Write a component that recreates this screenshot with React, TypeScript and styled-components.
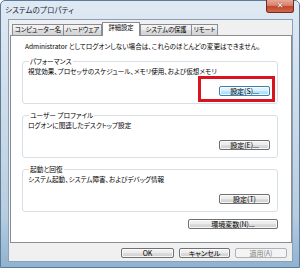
import React from "react";
import styled, { createGlobalStyle, css } from "styled-components";

const Global = createGlobalStyle`
  html, body { margin: 0; padding: 0; background: #fff; }
  body { width: 300px; height: 268px; overflow: hidden; }
  * { box-sizing: border-box; }
`;

const FONT = `"Noto Sans CJK JP", "Noto Sans", sans-serif`;

const Window = styled.div`
  position: relative;
  width: 300px;
  height: 268px;
  padding: 18px 6px 5px 7px;
  display: flex;
  flex-direction: column;
  font-family: ${FONT};
  font-feature-settings: "palt";
  color: #000;
  background: linear-gradient(180deg, #dfe9f3 0%, #cddcea 40%, #b8cde1 80%, #8fb2d2 100%);
  border: 1px solid #5d7a96;
  border-radius: 5px 5px 0 0;
`;

const TitleBar = styled.div`
  position: absolute;
  left: 0;
  right: 0;
  top: 0;
  height: 18px;
  display: flex;
  align-items: center;
  padding-left: 4px;
`;

const Title = styled.span`
  font-size: 7.5px;
  line-height: 1;
  color: #1b2a3a;
  letter-spacing: 0.1px;
`;

const CloseButton = styled.div`
  position: absolute;
  top: -1px;
  right: 5px;
  width: 28px;
  height: 13px;
  border: 1px solid #6e2d24;
  border-top: none;
  border-radius: 0 0 3px 3px;
  background: linear-gradient(180deg, #e9a898 0%, #d8806b 45%, #c4452b 55%, #cf6a4c 100%);
  display: flex;
  align-items: center;
  justify-content: center;
  color: #fff;
  font-family: "DejaVu Sans", sans-serif;
  font-weight: bold;
  font-size: 8px;
  line-height: 1;
  text-shadow: 0 0 1px #5a1a10;
`;

const Client = styled.div`
  flex: 1;
  background: #f0f0f0;
  border: 1px solid #8aa0b6;
  padding: 2px 2px 0 1px;
  display: flex;
  flex-direction: column;
`;

const TabStrip = styled.div`
  display: flex;
  align-items: flex-end;
  height: 13px;
  padding-left: 2px;
  position: relative;
  z-index: 1;
`;

const Tab = styled.div<{ $w: number; $active?: boolean }>`
  width: ${(p) => p.$w}px;
  height: 11px;
  border: 1px solid #898c95;
  border-bottom: none;
  margin-right: -1px;
  font-size: 6.3px;
  letter-spacing: -0.1px;
  line-height: 1;
  display: flex;
  align-items: center;
  justify-content: center;
  white-space: nowrap;
  overflow: hidden;
  background: linear-gradient(180deg, #f4f4f4 0%, #ebebeb 50%, #dcdcdc 51%, #d4d4d4 100%);
  ${(p) =>
    p.$active &&
    css`
      height: 14px;
      margin-bottom: -1px;
      margin-left: 1px;
      margin-right: 0;
      background: #fff;
      position: relative;
      z-index: 2;
      padding-bottom: 2px;
    `}
`;

const Panel = styled.div`
  width: 282px;
  height: 208px;
  background: #fff;
  border: 1px solid #898c95;
  padding: 6px 0 0 11px;
  display: flex;
  flex-direction: column;
`;

const Intro = styled.div`
  font-size: 6.6px;
  line-height: 8px;
  padding-left: 3px;
  white-space: nowrap;
`;

const GroupBox = styled.fieldset`
  margin: 0;
  width: 256px;
  height: 47px;
  border: 1px solid #d5dfe5;
  border-radius: 3px;
  padding: 0 7px 0 5px;
  display: flex;
  flex-direction: column;
  & + & {
    margin-top: 7px;
  }
`;

const Legend = styled.legend`
  font-size: 6.7px;
  line-height: 8px;
  padding: 0 1px;
  margin-left: 1px;
`;

const GroupText = styled.div`
  font-size: 6.6px;
  line-height: 8px;
  margin-top: 2px;
  white-space: nowrap;
`;

const ButtonRow = styled.div`
  display: flex;
  justify-content: flex-end;
  margin-top: 11px;
  position: relative;
`;

const Button = styled.div<{ $w?: number; $focus?: boolean; $disabled?: boolean }>`
  width: ${(p) => p.$w ?? 51}px;
  height: 10px;
  border: 1px solid #707070;
  border-radius: 2px;
  background: linear-gradient(180deg, #f2f2f2 0%, #ebebeb 50%, #dddddd 51%, #cfcfcf 100%);
  box-shadow: inset 0 0 0 1px rgba(255, 255, 255, 0.8);
  font-size: 7px;
  line-height: 1;
  display: flex;
  align-items: center;
  justify-content: center;
  white-space: nowrap;
  ${(p) =>
    p.$focus &&
    css`
      border-color: #3c7fb1;
      background: linear-gradient(180deg, #eaf6fd 0%, #d9f0fc 50%, #bee6fd 51%, #a7d9f5 100%);
    `}
  ${(p) =>
    p.$disabled &&
    css`
      border-color: #adb2b5;
      background: #f4f4f4;
      color: #838383;
      box-shadow: none;
    `}
`;

const Highlight = styled.div`
  position: absolute;
  right: -5px;
  top: -10px;
  width: 77px;
  height: 26px;
  border: 3px solid #d9141f;
  pointer-events: none;
`;

const EnvRow = styled.div`
  display: flex;
  justify-content: flex-end;
  width: 256px;
  margin-top: 7px;
`;

const Footer = styled.div`
  display: flex;
  justify-content: flex-end;
  gap: 5px;
  margin-top: 5px;
  padding-right: 3px;
`;

export default function App() {
  return (
    <>
      <Global />
      <Window>
        <TitleBar>
          <Title>システムのプロパティ</Title>
          <CloseButton>✕</CloseButton>
        </TitleBar>
        <Client>
          <TabStrip>
            <Tab $w={52}>コンピューター名</Tab>
            <Tab $w={39}>ハードウェア</Tab>
            <Tab $w={38} $active>
              詳細設定
            </Tab>
            <Tab $w={52}>システムの保護</Tab>
            <Tab $w={27}>リモート</Tab>
          </TabStrip>
          <Panel>
            <Intro>Administrator としてログオンしない場合は、これらのほとんどの変更はできません。</Intro>
            <GroupBox style={{ marginTop: 7 }}>
              <Legend>パフォーマンス</Legend>
              <GroupText>視覚効果、プロセッサのスケジュール、メモリ使用、および仮想メモリ</GroupText>
              <ButtonRow>
                <Button $focus>設定(S)...</Button>
                <Highlight />
              </ButtonRow>
            </GroupBox>
            <GroupBox>
              <Legend>ユーザー プロファイル</Legend>
              <GroupText>ログオンに関連したデスクトップ設定</GroupText>
              <ButtonRow>
                <Button>設定(E)...</Button>
              </ButtonRow>
            </GroupBox>
            <GroupBox>
              <Legend>起動と回復</Legend>
              <GroupText>システム起動、システム障害、およびデバッグ情報</GroupText>
              <ButtonRow>
                <Button>設定(T)</Button>
              </ButtonRow>
            </GroupBox>
            <EnvRow>
              <Button $w={90}>環境変数(N)...</Button>
            </EnvRow>
          </Panel>
          <Footer>
            <Button $w={53}>OK</Button>
            <Button $w={51}>キャンセル</Button>
            <Button $w={52} $disabled>
              適用(A)
            </Button>
          </Footer>
        </Client>
      </Window>
    </>
  );
}
